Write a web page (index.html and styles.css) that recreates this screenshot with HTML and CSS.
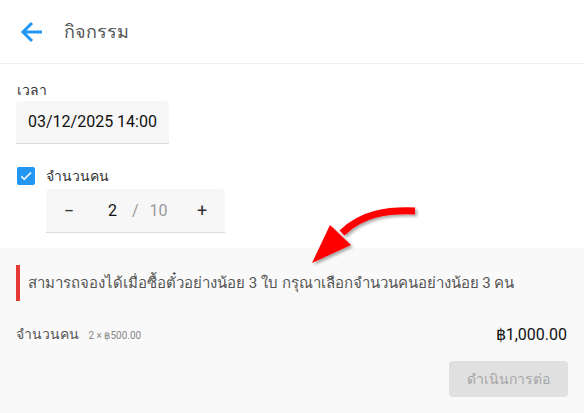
FILE: index.html
```html
<!DOCTYPE html>
<html>
<head>
    <title>กิจกรรม</title>
    <link rel="stylesheet" href="styles.css">
</head>
<body>
    <div class="header">
        <svg class="back" width="24" height="24" viewBox="0 0 24 24">
            <path d="M22 12H3.5 M12 3 L3 12 L12 21" fill="none" stroke="#2196f3" stroke-width="3"/>
        </svg>
        <span class="title">กิจกรรม</span>
    </div>

    <div class="form">
        <div class="field-label">เวลา</div>
        <div class="date-box">03/12/2025 14:00</div>

        <label class="check-row">
            <span class="checkbox">
                <svg width="14" height="14" viewBox="0 0 24 24">
                    <path d="M9 16.2L4.8 12l-1.4 1.4L9 19 21 7l-1.4-1.4L9 16.2z" fill="#fff" stroke="#fff" stroke-width="1"/>
                </svg>
            </span>
            <span>จำนวนคน</span>
        </label>
        <div class="stepper">
            <span class="step-btn">−</span>
            <span class="count">2</span>
            <span class="slash">/</span>
            <span class="max">10</span>
            <span class="step-btn">+</span>
        </div>
    </div>

    <div class="summary">
        <div class="notice">สามารถจองได้เมื่อซื้อตั๋วอย่างน้อย 3 ใบ กรุณาเลือกจำนวนคนอย่างน้อย 3 คน</div>
        <div class="total-row">
            <div class="total-label">จำนวนคน <span class="unit">2 × ฿500.00</span></div>
            <div class="total">฿1,000.00</div>
        </div>
        <div class="actions">
            <button class="next" disabled>ดำเนินการต่อ</button>
        </div>
    </div>

    <svg class="pointer" width="130" height="80" viewBox="0 0 130 80">
        <defs>
            <filter id="shadow" x="-20%" y="-20%" width="140%" height="140%">
                <feDropShadow dx="2" dy="2" stdDeviation="1.5" flood-color="#000" flood-opacity="0.35"/>
            </filter>
        </defs>
        <g filter="url(#shadow)">
            <path d="M115 16 C88 15 62 18 42 38" fill="none" stroke="#ff0000" stroke-width="7"/>
            <path d="M30 30 L51 50 L12 68 Z" fill="#ff0000"/>
        </g>
    </svg>
</body>
</html>
```

FILE: styles.css
```css
body {
    margin: 0;
    font-family: Roboto, "Noto Sans", sans-serif;
    color: #222;
    background: #fff;
    position: relative;
    width: 584px;
    height: 413px;
    overflow: hidden;
}
.header {
    height: 63px;
    display: flex;
    align-items: center;
    padding-left: 20px;
    border-bottom: 1px solid #eee;
}
.back {
    margin-right: 20px;
}
.title {
    font-size: 18px;
    color: #555;
}
.form {
    padding: 18px 16px 15px;
}
.field-label {
    font-size: 14px;
    line-height: 16px;
    color: #333;
    padding-left: 1px;
    margin-bottom: 3px;
}
.date-box {
    display: inline-block;
    background: #f7f7f7;
    border-radius: 4px 4px 0 0;
    border-bottom: 1px solid #ddd;
    padding: 11px 0 11px 12px;
    width: 141px;
    font-size: 16px;
    line-height: 20px;
    color: #111;
}
.check-row {
    display: flex;
    align-items: center;
    height: 19px;
    margin-top: 22px;
    font-size: 14px;
    line-height: 18px;
    color: #333;
}
.checkbox {
    width: 18px;
    height: 18px;
    border-radius: 2px;
    background: #2196f3;
    display: flex;
    align-items: center;
    justify-content: center;
    margin: 0 11px 0 1px;
}
.stepper {
    margin: 4px 0 0 30px;
    width: 179px;
    height: 43px;
    display: flex;
    align-items: center;
    background: #f7f7f7;
    border-radius: 4px 4px 0 0;
    border-bottom: 1px solid #ddd;
    font-size: 16px;
}
.step-btn {
    width: 46px;
    text-align: center;
    color: #333;
    font-size: 18px;
}
.count {
    margin-left: 16px;
    color: #111;
}
.slash {
    margin-left: 15px;
    color: #999;
}
.max {
    margin-left: 11px;
    color: #999;
}
.stepper .step-btn:last-child {
    margin-left: auto;
}
.summary {
    background: #f9f9f9;
    padding: 17px 16px 20px;
    height: 165px;
    box-sizing: border-box;
}
.notice {
    border-left: 4px solid #e53935;
    padding: 8px 0 8px 8px;
    font-size: 15px;
    line-height: 20px;
    color: #555;
}
.total-row {
    display: flex;
    justify-content: space-between;
    align-items: center;
    height: 20px;
    margin-top: 23px;
}
.total-label {
    font-size: 14px;
    color: #555;
}
.unit {
    font-size: 10px;
    color: #888;
    margin-left: 6px;
}
.total {
    font-size: 16px;
    color: #111;
    margin-right: 1px;
}
.actions {
    display: flex;
    justify-content: flex-end;
    margin-top: 17px;
}
.next {
    width: 119px;
    height: 36px;
    border: none;
    border-radius: 4px;
    background: #e0e0e0;
    color: #a6a6a6;
    font-size: 14px;
    font-family: inherit;
}
.pointer {
    position: absolute;
    left: 300px;
    top: 195px;
}
```
